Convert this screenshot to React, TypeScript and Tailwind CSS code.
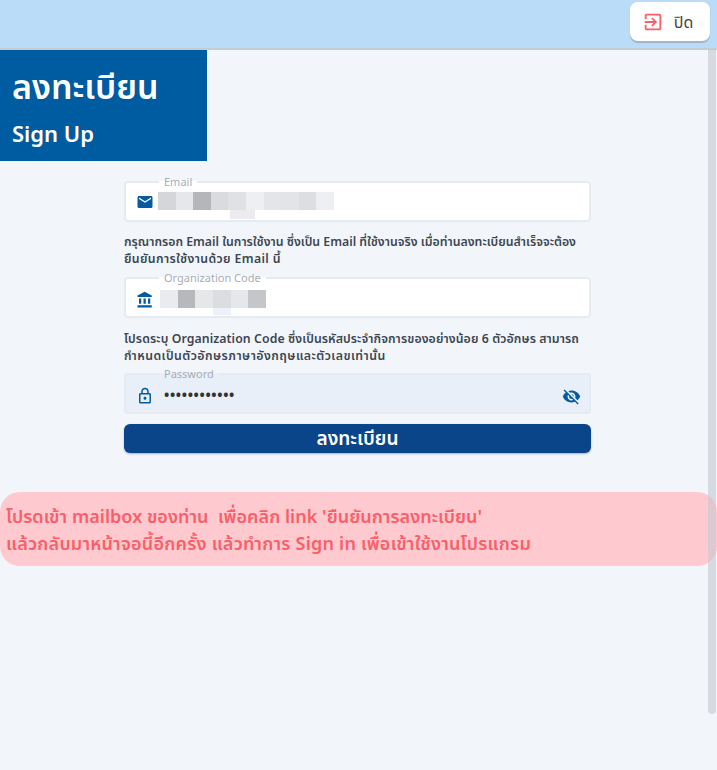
import type { ReactNode } from "react";

const thai = "font-['Noto_Sans','Noto_Sans_Thai','Liberation_Sans',sans-serif]";

function Icon({ d, size = 18, className }: { d: string; size?: number; className?: string }) {
    return (
        <svg width={size} height={size} viewBox="0 0 24 24" fill="currentColor" className={className}>
            <path d={d} />
        </svg>
    );
}

const mailPath =
    "M20 4H4c-1.1 0-1.99.9-1.99 2L2 18c0 1.1.9 2 2 2h16c1.1 0 2-.9 2-2V6c0-1.1-.9-2-2-2zm0 4l-8 5-8-5V6l8 5 8-5v2z";
const bankPath = "M4 10v7h3v-7H4zm6 0v7h3v-7h-3zM2 22h19v-3H2v3zm14-12v7h3v-7h-3zm-4.5-9L2 6v2h19V6l-9.5-5z";
const lockPath =
    "M18 8h-1V6c0-2.76-2.24-5-5-5S7 3.24 7 6v2H6c-1.1 0-2 .9-2 2v10c0 1.1.9 2 2 2h12c1.1 0 2-.9 2-2V10c0-1.1-.9-2-2-2zM9 6c0-1.66 1.34-3 3-3s3 1.34 3 3v2H9V6zm9 14H6V10h12v10zm-6-3c1.1 0 2-.9 2-2s-.9-2-2-2-2 .9-2 2 .9 2 2 2z";
const eyeOffPath =
    "M12 7c2.76 0 5 2.24 5 5 0 .65-.13 1.26-.36 1.83l2.92 2.92c1.51-1.26 2.7-2.89 3.43-4.75-1.73-4.39-6-7.5-11-7.5-1.4 0-2.74.25-3.98.7l2.16 2.16C10.74 7.13 11.35 7 12 7zM2 4.27l2.28 2.28.46.46C3.08 8.3 1.78 10.02 1 12c1.73 4.39 6 7.5 11 7.5 1.55 0 3.03-.3 4.38-.84l.42.42L19.73 22 21 20.73 3.27 3 2 4.27zM7.53 9.8l1.55 1.55c-.05.21-.08.43-.08.65 0 1.66 1.34 3 3 3 .22 0 .44-.03.65-.08l1.55 1.55c-.67.33-1.41.53-2.2.53-2.76 0-5-2.24-5-5 0-.79.2-1.53.53-2.2zm4.31-.78l3.15 3.15.02-.16c0-1.66-1.34-3-3-3l-.17.01z";
const exitPath =
    "M10.09 15.59L11.5 17l5-5-5-5-1.41 1.41L12.67 11H3v2h9.67l-2.58 2.59zM19 3H5c-1.11 0-2 .9-2 2v4h2V5h14v14H5v-4H3v4c0 1.1.89 2 2 2h14c1.1 0 2-.9 2-2V5c0-1.1-.9-2-2-2z";

function Mosaic({ cells, className }: { cells: string[]; className: string }) {
    return (
        <div className={`flex ${className}`}>
            {cells.map((c, i) => (
                <div key={i} className={`h-full flex-1 ${c}`} />
            ))}
        </div>
    );
}

function Field({
    label,
    icon,
    filled,
    children,
}: {
    label: string;
    icon: ReactNode;
    filled?: boolean;
    children: ReactNode;
}) {
    return (
        <fieldset
            className={`flex h-[46px] w-full items-center rounded border-2 border-[#e6ebf2] pl-[9px] pr-[8px] ${
                filled ? "bg-[#e8eff8]" : "bg-white"
            }`}
        >
            <legend className="ml-[24px] px-[5px] text-[11px] leading-[12px] text-[#a8adb5]">{label}</legend>
            <div className="flex w-[20px] shrink-0 justify-center text-[#065a9f]">{icon}</div>
            {children}
        </fieldset>
    );
}

export default function App() {
    return (
        <div className={`flex h-[770px] w-[717px] flex-col overflow-hidden bg-[#f2f6fb] ${thai}`}>
            <header className="flex h-[50px] shrink-0 justify-end border-b-2 border-[#c4ccd4] bg-[#badcf9] pr-[7px] pt-[2px]">
                <button className="flex h-[39px] w-[80px] items-center justify-center gap-[10px] rounded-lg bg-white pr-[5px] shadow-[0_2px_1px_#9fb4c8]">
                    <Icon d={exitPath} size={22} className="text-[#fa5f69]" />
                    <span className="text-[16px] text-[#444]">ปิด</span>
                </button>
            </header>

            <main className="relative flex-1">
                <div className="flex h-[111px] w-[207px] flex-col bg-[#005ca1] pl-[12px] pt-[14px] font-semibold text-white">
                    <h1 className="text-[34px] leading-[44px]">ลงทะเบียน</h1>
                    <p className="mt-[11px] text-[22px] leading-[28px]">Sign Up</p>
                </div>

                <form className="ml-[124px] mt-[15px] flex w-[467px] flex-col">
                    <Field label="Email" icon={<Icon d={mailPath} />}>
                        <div className="relative ml-[3px] mt-[4px] h-[24px] w-[176px]">
                            <Mosaic
                                className="h-[18px] w-full"
                                cells={[
                                    "bg-[#d5d6da]",
                                    "bg-[#e6e7ea]",
                                    "bg-[#b4b6ba]",
                                    "bg-[#dadbdf]",
                                    "bg-[#e0e1e4]",
                                    "bg-[#eeeff1]",
                                    "bg-[#e4e5e8]",
                                    "bg-[#e3e4e7]",
                                    "bg-[#dddee1]",
                                    "bg-[#eeeff2]",
                                ]}
                            />
                            <div className="absolute left-[72px] top-[18px] h-[9px] w-[25px] bg-[#ececf0]" />
                        </div>
                    </Field>
                    <p className="mt-[11px] text-[12.3px] font-semibold leading-[17px] text-[#3d4650]">
                        กรุณากรอก Email ในการใช้งาน ซึ่งเป็น Email ที่ใช้งานจริง เมื่อท่านลงทะเบียนสำเร็จจะต้อง
                        <br />
                        <span className="tracking-[0.35px]">ยืนยันการใช้งานด้วย Email นี้</span>
                    </p>

                    <div className="mt-[5px]">
                        <Field label="Organization Code" icon={<Icon d={bankPath} />}>
                            <div className="relative ml-[5px] mt-[4px] h-[24px] w-[106px]">
                                <Mosaic
                                    className="h-[18px] w-full"
                                    cells={[
                                        "bg-[#eaebee]",
                                        "bg-[#b6b8bb]",
                                        "bg-[#e6e7e9]",
                                        "bg-[#dcdde1]",
                                        "bg-[#e6e7ea]",
                                        "bg-[#c4c6c9]",
                                    ]}
                                />
                                <div className="absolute left-[53px] top-[18px] h-[7px] w-[18px] bg-[#eef2f8]" />
                            </div>
                        </Field>
                    </div>
                    <p className="mt-[12px] text-[12.3px] font-semibold leading-[17px] text-[#3d4650]">
                        <span className="tracking-[0.08px]">
                            โปรดระบุ Organization Code ซึ่งเป็นรหัสประจำกิจการของอย่างน้อย 6 ตัวอักษร สามารถ
                        </span>
                        <br />
                        <span className="tracking-[0.45px]">กำหนดเป็นตัวอักษรภาษาอังกฤษและตัวเลขเท่านั้น</span>
                    </p>

                    <div className="mt-[4px]">
                        <Field label="Password" filled icon={<Icon d={lockPath} />}>
                            <span className="mb-[3px] ml-[9px] flex-1 text-[14px] font-bold tracking-[0.65px] text-[#333]">
                                ••••••••••••
                            </span>
                            <Icon d={eyeOffPath} size={19} className="text-[#065a9f]" />
                        </Field>
                    </div>

                    <button
                        type="button"
                        className="mt-[10px] h-[29px] w-full rounded-md bg-[#0b4589] text-[19px] font-semibold leading-[29px] text-white shadow-[0_1px_2px_#9bb4d0]"
                    >
                        ลงทะเบียน
                    </button>
                </form>

                <div className="mt-[39px] h-[74px] rounded-[20px] bg-[#fec9cf] pl-[6px] pt-[11px] text-[18px] font-semibold leading-[27px] text-[#fa5f69]">
                    <p className="whitespace-pre tracking-[0.04px]">
                        โปรดเข้า mailbox ของท่าน  เพื่อคลิก link 'ยืนยันการลงทะเบียน'
                    </p>
                    <p className="tracking-[0.22px]">
                        แล้วกลับมาหน้าจอนี้อีกครั้ง แล้วทำการ Sign in เพื่อเข้าใช้งานโปรแกรม
                    </p>
                </div>

                {/* scrollbar sits on top of the content */}
                <div className="absolute right-[1px] top-0 h-[664px] w-[8px] rounded-b-full bg-[#c5cad0]/60" />
            </main>
        </div>
    );
}
